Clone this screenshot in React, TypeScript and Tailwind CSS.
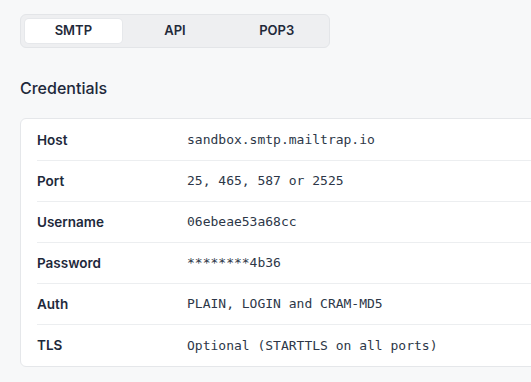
import React from "react";

const rows: [string, string][] = [
  ["Host", "sandbox.smtp.mailtrap.io"],
  ["Port", "25, 465, 587 or 2525"],
  ["Username", "06ebeae53a68cc"],
  ["Password", "********4b36"],
  ["Auth", "PLAIN, LOGIN and CRAM-MD5"],
  ["TLS", "Optional (STARTTLS on all ports)"],
];

export default function App() {
  return (
    <div
      className="w-[531px] h-[382px] overflow-hidden bg-[#f7f8f9] pt-[14px] pl-[20px]"
      style={{ fontFamily: "Inter, 'Noto Sans', sans-serif" }}
    >
      <div className="flex w-[310px] h-[34px] p-[4px] gap-[5px] rounded-[6px] border border-[#e3e5e8] bg-[#eeeff1]">
        <div className="flex-1 flex items-center justify-center rounded-[4px] bg-white text-[13px] font-semibold text-[#1f2a3a] shadow-[0_0_0_1px_#e6e8eb]">
          SMTP
        </div>
        <div className="flex-1 flex items-center justify-center text-[13px] font-semibold text-[#1f2a3a]">
          API
        </div>
        <div className="flex-1 flex items-center justify-center text-[13px] font-semibold text-[#1f2a3a]">
          POP3
        </div>
      </div>
      <h2 className="mt-[28px] text-[16px] leading-[24px] font-medium text-[#1e293b]">
        Credentials
      </h2>
      <div className="mt-[18px] w-[540px] rounded-[6px] border border-[#e5e7ea] bg-white px-[16px] pt-[1px]">
        {rows.map(([k, v], i) => (
          <div
            key={k}
            className={`flex items-center h-[41px] ${i < rows.length - 1 ? "border-b border-[#eceef0]" : ""}`}
          >
            <div className="w-[150px] text-[13.5px] font-semibold text-[#1e293b]">{k}</div>
            <div
              className="text-[13px] text-[#2d3748]"
              style={{ fontFamily: "'DejaVu Sans Mono', monospace" }}
            >
              {v}
            </div>
          </div>
        ))}
      </div>
    </div>
  );
}
